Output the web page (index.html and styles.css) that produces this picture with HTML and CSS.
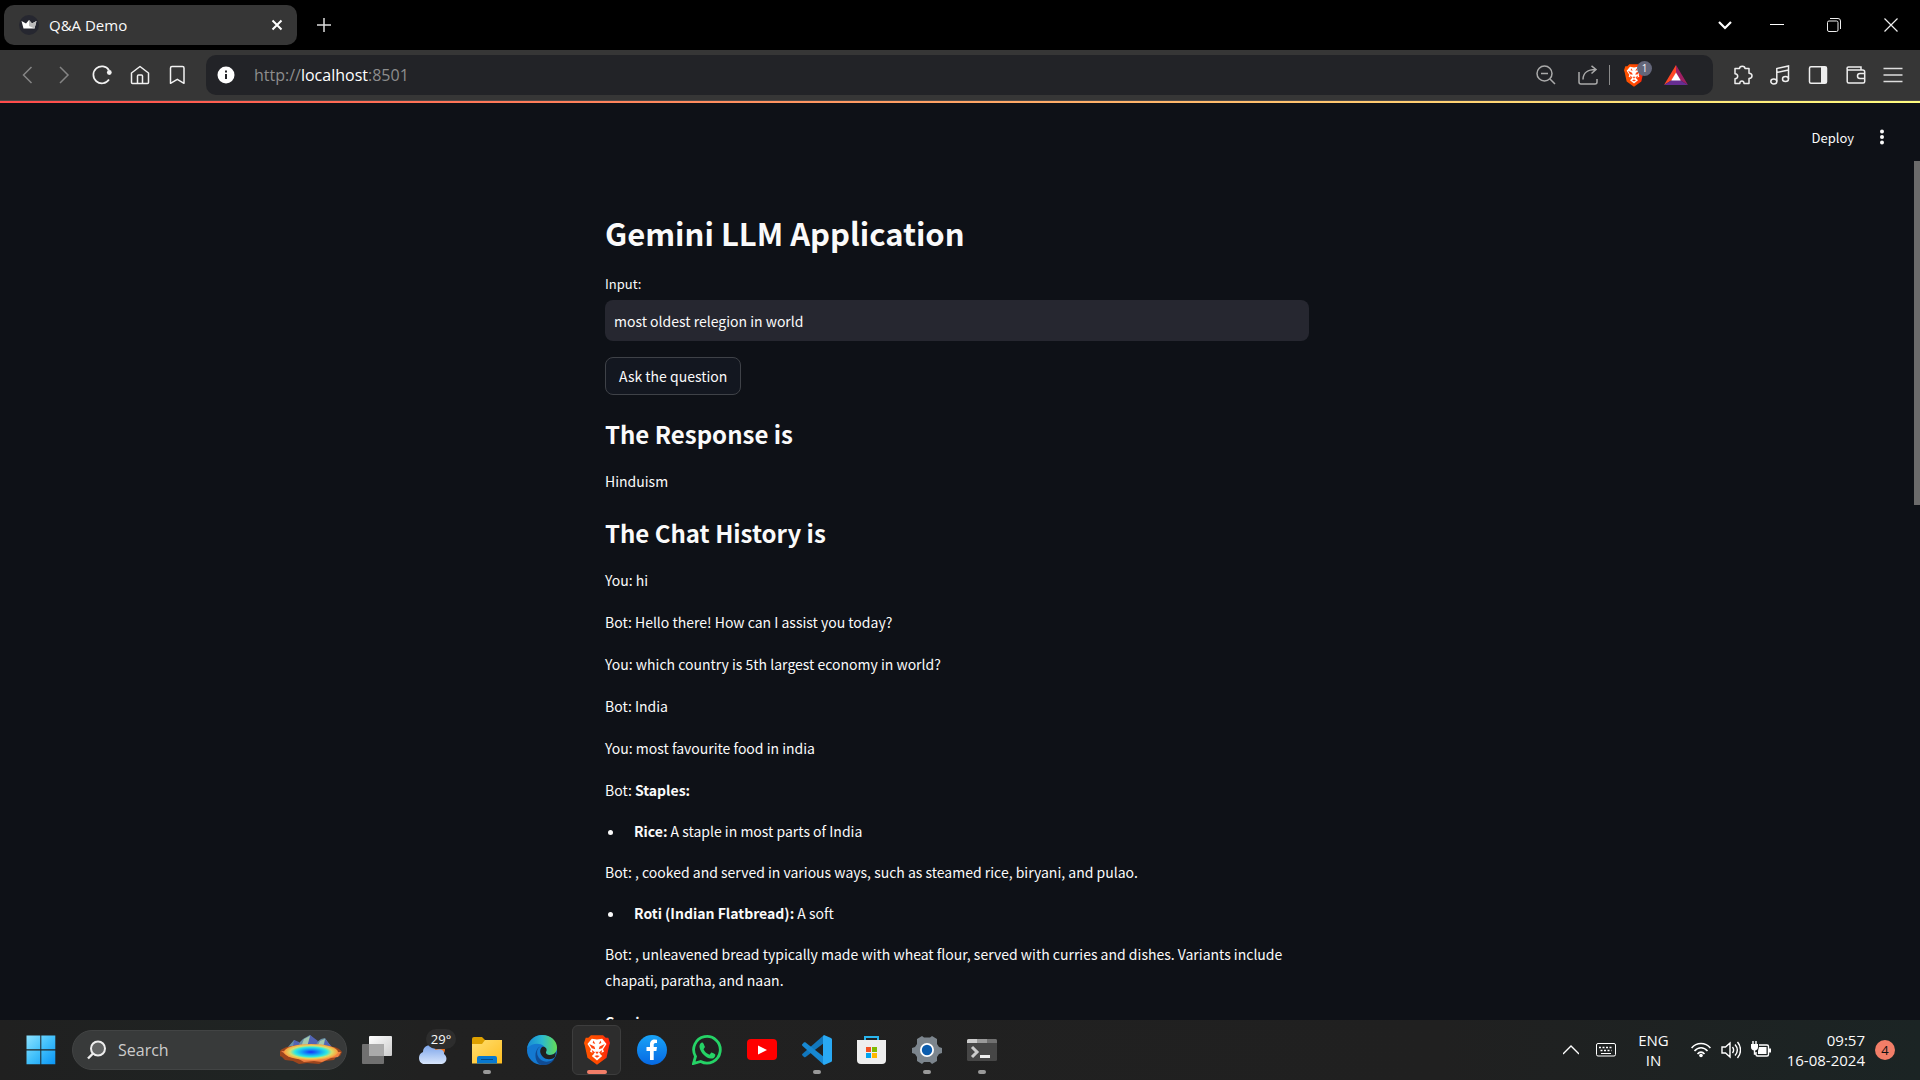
FILE: index.html
```html
<!DOCTYPE html>
<html lang="en">
<head>
<meta charset="utf-8">
<title>Q&amp;A Demo</title>
<link rel="stylesheet" href="styles.css">
</head>
<body>
<header class="tabstrip">
  <div class="tab">
    <svg class="favicon" width="20" height="20" viewBox="0 0 20 20"><circle cx="10" cy="10" r="10" fill="#262730"/><path d="M2.5 6 7 8.500 10 5l3 3.500L17.500 6 15.500 13.500h-11z" fill="#fff"/><path d="M10 5l3 3.500L17.500 6 15.500 13.500 10 11z" fill="#bbb"/></svg>
    <span class="tab-title">Q&amp;A Demo</span>
    <button class="icon-btn tab-close" aria-label="Close tab"><svg width="12" height="12" viewBox="0 0 12 12" stroke="#fff" stroke-width="2"><path d="M1.500 1.500l9 9M10.500 1.500l-9 9"/></svg></button>
  </div>
  <button class="icon-btn new-tab" aria-label="New tab"><svg width="14" height="14" viewBox="0 0 14 14" stroke="#ddd" stroke-width="1.500"><path d="M7 0v14M0 7h14"/></svg></button>
  <div class="window-controls">
    <button class="icon-btn chevron" aria-label="Search tabs"><svg width="14" height="10" viewBox="0 0 14 10" fill="none" stroke="#fff" stroke-width="2.200"><path d="M1 2l6 6 6-6"/></svg></button>
    <button class="icon-btn" aria-label="Minimize"><svg width="14" height="14" viewBox="0 0 14 14" stroke="#fff"><path d="M0 6.500h14"/></svg></button>
    <button class="icon-btn" aria-label="Restore"><svg width="14" height="14" viewBox="0 0 14 14" fill="none" stroke="#eee"><rect x=".5" y="3" width="10.500" height="10.500" rx="1.500"/><path d="M3 .5h8a2.500 2.500 0 0 1 2.500 2.500v8"/></svg></button>
    <button class="icon-btn" aria-label="Close"><svg width="14" height="14" viewBox="0 0 14 14" stroke="#eee" stroke-width="1.200"><path d="M.5.5l13 13M13.500.5l-13 13"/></svg></button>
  </div>
</header>

<nav class="toolbar">
  <div class="nav-buttons">
    <button class="icon-btn" aria-label="Back"><svg width="20" height="20" viewBox="0 0 20 20" fill="none" stroke="#858585" stroke-width="1.500"><path d="M14.500 2l-8 8 8 8"/></svg></button>
    <button class="icon-btn" aria-label="Forward"><svg width="20" height="20" viewBox="0 0 20 20" fill="none" stroke="#858585" stroke-width="1.500"><path d="M6 2l8 8-8 8"/></svg></button>
    <button class="icon-btn" aria-label="Reload"><svg width="20" height="20" viewBox="0 0 20 20" fill="none" stroke="#f2f2f2" stroke-width="1.700"><path d="M17 14.500A8.500 8.500 0 1 1 17 5.200"/><circle cx="17.300" cy="7.500" r="2.400" fill="#f2f2f2" stroke="none"/></svg></button>
    <button class="icon-btn" aria-label="Home"><svg width="20" height="20" viewBox="0 0 20 20" fill="none" stroke="#f2f2f2" stroke-width="1.500" stroke-linejoin="round"><path d="M1.500 8 10 1.500 18.500 8v9.500a1 1 0 0 1-1 1h-15a1 1 0 0 1-1-1zM7.500 18.500V11a1 1 0 0 1 1-1h3a1 1 0 0 1 1 1v7.500"/></svg></button>
    <button class="icon-btn" aria-label="Bookmark"><svg width="20" height="20" viewBox="0 0 20 20" fill="none" stroke="#f2f2f2" stroke-width="1.500" stroke-linejoin="round"><path d="M3.500 18.300V3a1.500 1.500 0 0 1 1.500-1.500h10.500A1.500 1.500 0 0 1 17 3v15.300l-6.700-4z"/></svg></button>
  </div>
  <div class="address">
    <button class="icon-btn" aria-label="Site information"><svg width="18" height="18" viewBox="0 0 18 18"><circle cx="9" cy="9" r="8.500" fill="#fff"/><path d="M9 8v5M9 4.500v2" stroke="#222327" stroke-width="2"/></svg></button>
    <div class="url" role="textbox" aria-label="Address">http://<span class="host">localhost</span>:8501</div>
    <button class="icon-btn zoom-btn" aria-label="Zoom"><svg width="20" height="20" viewBox="0 0 20 20" fill="none" stroke="#aaa" stroke-width="1.500"><circle cx="8.500" cy="8.500" r="7.500"/><path d="M14 14l5 5M5 8.500h7"/></svg></button>
    <button class="icon-btn share-btn" aria-label="Share"><svg width="20" height="20" viewBox="0 0 20 20" fill="none" stroke="#aaa" stroke-width="1.500"><path d="M1 7v10a2 2 0 0 0 2 2h14a2 2 0 0 0 2-2v-3M5 14.500C5 8 10 4.500 17.500 4.500M13.500.8l4.500 3.700-4.500 4"/></svg></button>
    <span class="divider"></span>
    <button class="icon-btn shield" aria-label="Shields"><svg width="20" height="23" viewBox="0 0 30 34"><use href="#lion"/></svg><span class="shield-count">1</span></button>
    <button class="icon-btn" aria-label="Rewards"><svg width="24" height="20" viewBox="0 0 24 20"><path d="M12 0 0 20l8-5 4-7z" fill="#ff4724"/><path d="M12 0v8l4 7 8 5z" fill="#9e1f63"/><path d="M0 20h24l-8-5H8z" fill="#662d91"/><path d="M12 7.500l4.800 8H7.200z" fill="#fff"/></svg></button>
  </div>
  <div class="nav-buttons">
    <button class="icon-btn" aria-label="Extensions"><svg width="20" height="20" viewBox="0 0 20 20" fill="none" stroke="#eee" stroke-width="1.500" stroke-linejoin="round"><path d="M2 3.500h4.500c0-3 5.500-3 5.500 0h4v4.700c4 .1 4 5 0 5.300v5h-5c.2-3.300-4.400-3.300-4.200 0H2v-4.700c3.600-.2 3.600-4.800 0-5z"/></svg></button>
    <button class="icon-btn" aria-label="Media"><svg width="20" height="20" viewBox="0 0 20 20" fill="none" stroke="#eee" stroke-width="1.500"><ellipse cx="3.800" cy="16.500" rx="3" ry="2.500"/><ellipse cx="15.500" cy="14" rx="3" ry="2.500"/><path d="M6.800 16.500V3.500l11.700-2.500v13M6.800 7.500l11.700-2.500"/></svg></button>
    <button class="icon-btn" aria-label="Side panel"><svg width="20" height="20" viewBox="0 0 20 20"><rect x="1.500" y="1.700" width="17" height="16.500" rx="1.500" fill="none" stroke="#eee" stroke-width="1.500"/><path d="M13 2h6v16h-6z" fill="#eee"/></svg></button>
    <button class="icon-btn" aria-label="Wallet"><svg width="20" height="20" viewBox="0 0 20 20" fill="none" stroke="#eee" stroke-width="1.500"><path d="M1.200 4v12.500a1.500 1.500 0 0 0 1.500 1.500h14.500a1.500 1.500 0 0 0 1.500-1.500V7a2 2 0 0 0-2-2H2.500A1.500 1.500 0 0 1 2.500 2h12.500v2.500"/><path d="M18.700 8.500H14a2.500 2.500 0 0 0 0 5h4.700"/></svg></button>
    <button class="icon-btn" aria-label="Menu"><svg width="20" height="20" viewBox="0 0 20 20" stroke="#ddd" stroke-width="1.600"><path d="M.5 3.500h19M.5 10h19M.5 16.500h19"/></svg></button>
  </div>
</nav>

<main class="page">
  <div class="app-header">
    <button class="deploy">Deploy</button>
    <button class="icon-btn" aria-label="App menu"><svg width="20" height="20" viewBox="0 0 20 20" fill="#fafafa"><circle cx="10" cy="4.500" r="2"/><circle cx="10" cy="10" r="2"/><circle cx="10" cy="15.500" r="2"/></svg></button>
  </div>
  <div class="scroll-area">
    <article class="content">
      <h1>Gemini LLM Application</h1>
      <label for="question">Input:</label>
      <input class="question" id="question" type="text" value="most oldest relegion in world" spellcheck="false">
      <button class="ask">Ask the question</button>
      <h2>The Response is</h2>
      <p>Hinduism</p>
      <h2>The Chat History is</h2>
      <p>You: hi</p>
      <p>Bot: Hello there! How can I assist you today?</p>
      <p>You: which country is 5th largest economy in world?</p>
      <p>Bot: India</p>
      <p>You: most favourite food in india</p>
      <p>Bot: <strong>Staples:</strong></p>
      <ul><li><strong>Rice:</strong> A staple in most parts of India</li></ul>
      <p>Bot: , cooked and served in various ways, such as steamed rice, biryani, and pulao.</p>
      <ul><li><strong>Roti (Indian Flatbread):</strong> A soft</li></ul>
      <p>Bot: , unleavened bread typically made with wheat flour, served with curries and dishes. Variants include chapati, paratha, and naan.</p>
      <p><strong>Curries:</strong></p>
    </article>
    <div class="scrollbar"><div class="thumb"></div></div>
  </div>
</main>

<footer class="taskbar">
  <button class="icon-btn start" aria-label="Start"><svg width="30" height="30" viewBox="0 0 30 30"><defs><linearGradient id="win" x1="0" y1="0" x2="1" y2="1"><stop stop-color="#8de2ff"/><stop offset=".5" stop-color="#41c0fb"/><stop offset="1" stop-color="#0a95f5"/></linearGradient></defs><path d="M.5.5h13.800v13.800H.5zM15.300.5h14v13.800h-14zM.5 15.500h13.800v13.800H.5zM15.300 15.500h14v13.800h-14z" fill="url(#win)"/></svg></button>
  <div class="search">
    <svg width="20" height="20" viewBox="0 0 20 20" fill="#626464" stroke="#eee" stroke-width="2"><circle cx="11" cy="8.500" r="7"/><path d="M6 13.500 1 18.500" stroke-width="2.400"/></svg>
    <input class="search-field" type="text" placeholder="Search" aria-label="Search">
    <svg class="spring" width="62" height="32" viewBox="0 0 62 32"><defs><radialGradient id="pool"><stop stop-color="#1730f5"/><stop offset=".35" stop-color="#15a5f5"/><stop offset=".6" stop-color="#2ee8e0"/><stop offset=".78" stop-color="#d8dd6a"/><stop offset="1" stop-color="#ff9c3a"/></radialGradient></defs><path d="M8 13l6-7 5 3 4-4 7-4 7 7 4-3 4-1 7 10z" fill="#6a91a8"/><path d="M30 1l-3 11 8 1 3-6zM14 6l-1 7h7l-1-5zM45 5l-1 8h8z" fill="#5264b5"/><path d="M24 5l-3 8h6l3-11zM40 7l-3 6h6l2-8z" fill="#a4c9af"/><path d="M0 17c3-4 12-6 31-6s28 2 31 7l-2 4-4 1-2 3-9 1-6 3-12-1-8 1-6-3-8-1-3-3-4-2z" fill="#9c451d"/><path d="M1 17l8 6 8 1 7 4 10-1 8 1 9-4 7-1 3-5z" fill="#ee8144"/><ellipse cx="31" cy="18" rx="27" ry="8" fill="url(#pool)"/></svg>
  </div>
  <div class="apps">
    <button class="app" aria-label="Task view"><svg width="30" height="30" viewBox="0 0 30 30"><defs><linearGradient id="pane" x2="1" y2="1"><stop stop-color="#fff"/><stop offset="1" stop-color="#ccc"/></linearGradient></defs><rect x="7" y="1" width="23" height="20" rx="1" fill="url(#pane)"/><rect y="9" width="22" height="20" rx="1" fill="#707070"/><path d="M7 9h15v12H7z" fill="#aaa"/></svg></button>
    <button class="app weather" aria-label="Weather"><svg width="30" height="30" viewBox="0 0 30 30"><defs><linearGradient id="cloud" x2="0" y2="1"><stop stop-color="#7da5ea"/><stop offset="1" stop-color="#d8e6fc"/></linearGradient></defs><circle cx="22" cy="15" r="6" fill="#e9711c"/><path d="M6 29a6.500 6.500 0 0 1 0-12C6 9 17 8 18.500 15c6-2 9 1 8.500 4 4 3 3 9-2 10z" fill="url(#cloud)"/></svg><span class="temp">29°</span></button>
    <button class="app running" aria-label="File Explorer"><svg width="30" height="30" viewBox="0 0 30 30"><path d="M0 4a2 2 0 0 1 2-2h8l3 3v8H0z" fill="#dda000"/><defs><linearGradient id="folder" x2="1" y2="1"><stop stop-color="#ffdf70"/><stop offset="1" stop-color="#ffbd20"/></linearGradient></defs><path d="M0 9h10l3-4h17v23.500H0z" fill="url(#folder)"/><path d="M5 28.500V23a2 2 0 0 1 2-2h16a2 2 0 0 1 2 2v5.500z" fill="#0878cf"/><path d="M9 24.500h12" stroke="#064b86"/></svg></button>
    <button class="app" aria-label="Edge"><svg width="30" height="30" viewBox="0 0 30 30"><defs><linearGradient id="edgeTop" x2="1"><stop stop-color="#1689d6"/><stop offset=".5" stop-color="#2bb9cf"/><stop offset="1" stop-color="#65dd54"/></linearGradient></defs><circle cx="15" cy="15" r="15" fill="#1479d1"/><path d="M0 13C2 5 8 0 15 0c9 0 15 6 15 12.500 0 5-3.500 7.500-7 7.500-3 0-4.500-1.200-4-3C20 9 8 5 0 13z" fill="url(#edgeTop)"/><path d="M15 11c-5 1-7 8-2 13s13 2 15-1c-3 6-9 8-14 7C6 27 7 12 15 11z" fill="#104b93"/><path d="M15 12c3-1 6 2 4 5-.5 1.500 1 3 3.500 3 3 0 5-1 6.500-3l-1 5c-3 3-9 3-12 0s-4-7-1-10z" fill="#202020"/></svg></button>
    <button class="app active" aria-label="Brave"><svg width="26" height="30" viewBox="0 0 30 34"><defs><linearGradient id="brave"><stop stop-color="#ff5500"/><stop offset=".6" stop-color="#ff4700"/><stop offset="1" stop-color="#ff1d10"/></linearGradient>
      <g id="lion"><path d="M8 0h14l3 3h3l2 6-1 3-3 14-11 8L4 26 1 12 0 9l2-6h3z" fill="url(#brave)"/><path d="M9 4l6 1 6-1 5 6-4 6 1 3-5 2 3 3-6 5-6-5 3-3-5-2 1-3-4-6z" fill="#fff"/><path d="M6 10l6 3 1 3-4-1zM24 10l-6 3-1 3 4-1zM11 6l2 4-3-1zM19 6l-2 4 3-1zM13 19h4l-2 3zM9 17l4 3-3 1zM21 17l-4 3 3 1zM12 24l3-1 3 1-3 2z" fill="#ff4310"/></g></defs><use href="#lion"/></svg></button>
    <button class="app" aria-label="Facebook"><svg width="30" height="30" viewBox="0 0 30 30"><defs><linearGradient id="face" x2="0" y2="1"><stop stop-color="#18a3f7"/><stop offset="1" stop-color="#0668e3"/></linearGradient></defs><circle cx="15" cy="15" r="15" fill="url(#face)"/><path d="M13 25v-9H9.500v-4H13V9.500C13 6 15 4.500 17.500 4.500l2.500.2V8h-1.500C17 8 16.700 9 16.700 10v2H20l-.6 4h-2.700v9z" fill="#fff"/></svg></button>
    <button class="app" aria-label="WhatsApp"><svg width="30" height="30" viewBox="0 0 30 30"><path d="M1.500 28.500l2-7A13.300 13.300 0 1 1 8.700 26.500z" fill="none" stroke="#25d366" stroke-width="2.800"/><path d="M10 7.500c1 0 1.300.4 3 4.500l-1.500 2.200c1.500 3 3.300 4.300 6 5.500l1.800-2.200c.8.100 3.700 1.500 4 1.900.2 3-2.300 4.300-4.500 4.200C14 23 8.500 18 7.500 12c-.2-2 1-4.300 2.500-4.500z" fill="#25d366"/></svg></button>
    <button class="app" aria-label="YouTube"><svg width="30" height="30" viewBox="0 0 30 30"><rect y="4" width="30" height="21" rx="4" fill="#f00"/><path d="M11 10.500l9 4.500-9 4.500z" fill="#fff"/></svg></button>
    <button class="app running" aria-label="Visual Studio Code"><svg width="30" height="30" viewBox="0 0 30 30"><path d="M0 20l2 2c.5.400 1 .4 1.600 0L22 8V0L.300 19z" fill="#1177bd"/><path d="M0 9.500 2 7.500c.5-.4 1-.4 1.600 0L22 22v8L.3 10.800z" fill="#1788d2"/><path d="M22 0l7 3c.7.400 1 .8 1 1.500v21c0 .7-.3 1.200-1 1.500l-7 3-1-1.500V1.500z" fill="#29a9f4"/></svg></button>
    <button class="app" aria-label="Microsoft Store"><svg width="30" height="30" viewBox="0 0 30 30"><path d="M8 7V2h13v5" fill="none" stroke="#29b5ed" stroke-width="2"/><path d="M0 5h29v20a4 4 0 0 1-4 4H4a4 4 0 0 1-4-4z" fill="#eee"/><path d="M9 12h5v5H9z" fill="#f25022"/><path d="M15 12h5v5h-5z" fill="#7fba00"/><path d="M9 18h5v5H9z" fill="#00a4ef"/><path d="M15 18h5v5h-5z" fill="#ffb900"/></svg></button>
    <button class="app running" aria-label="Settings"><svg width="30" height="30" viewBox="0 0 30 30"><path d="M10 1l2 1.500h6L20 1l5 3v5l2 3 3 1v5l-3 1-2 3 0 4-5 3-2-2h-6l-2 2-5-3 0-4-2-3-3-1v-5l3-1 2-3V4z" fill="#7c858d"/><circle cx="15" cy="15" r="7" fill="#fff"/><circle cx="15" cy="15" r="5.200" fill="#0b5cad"/></svg></button>
    <button class="app running" aria-label="Terminal"><svg width="30" height="30" viewBox="0 0 30 30"><rect y="4" width="30" height="22" rx="1.500" fill="#464646"/><path d="M0 8V5.500A1.500 1.500 0 0 1 1.500 4H10v4z" fill="#ccc"/><path d="M10 4h10v4H10z" fill="#999"/><path d="M20 4h8.500A1.500 1.500 0 0 1 30 5.500V8H20z" fill="#707070"/><path d="M5 12l5 5-5 5" fill="none" stroke="#ccc" stroke-width="3"/><path d="M13 20h10v3H13z" fill="#eee"/></svg></button>
  </div>
  <div class="tray">
    <button class="icon-btn" aria-label="Hidden icons"><svg width="16" height="16" viewBox="0 0 16 16" fill="none" stroke="#fff" stroke-width="1.300"><path d="M0 12l8-8 8 8"/></svg></button>
    <button class="icon-btn" aria-label="Touch keyboard"><svg width="20" height="14" viewBox="0 0 20 14" fill="none" stroke="#fff"><rect x=".5" y=".5" width="19" height="12.500" rx="1.500"/><path d="M3 4.500h14M4.500 7.500h11" stroke-dasharray="2 1.500" stroke-width="1.600"/><path d="M5 10.500h10"/></svg></button>
    <button class="text-btn language">ENG<br>IN</button>
    <button class="icon-btn status" aria-label="Network, sound and battery">
      <svg width="20" height="16" viewBox="0 0 20 16" fill="none" stroke="#fff" stroke-width="1.600"><path d="M.6 6c5-6 13.800-6 18.800 0M3.500 9c3.700-4.400 9.300-4.400 13 0M6.500 12c2-2.500 5-2.500 7 0"/><circle cx="10" cy="13.500" r="1.800" fill="#fff" stroke="none"/></svg>
      <svg width="20" height="18" viewBox="0 0 20 18" fill="none" stroke="#fff" stroke-width="1.400"><path d="M1 6h3.500L9 2v14l-4.500-4H1zM11.500 6c1.500 2 1.500 4 0 6M14 3.500c3 3.500 3 7.500 0 11M16.500 1c4 4.500 4 11.500 0 16"/></svg>
      <svg width="20" height="18" viewBox="0 0 20 18" fill="none" stroke="#fff" stroke-width="1.400"><path d="M8 4h8a1.500 1.500 0 0 1 1.500 1.500v8A1.500 1.500 0 0 1 16 15H6.500A1.500 1.500 0 0 1 5 13.500V11"/><path d="M8 6h7.500v7H7v-3zM18 7.500h2v4h-2z" fill="#fff" stroke="none"/><path d="M0 3h7v3a3 3 0 0 1-7 0z" fill="#fff" stroke="none"/><path d="M2 0v4M5 0v4M3.500 8v5H5"/></svg>
    </button>
    <button class="text-btn clock">09:57<br>16-08-2024</button>
    <span class="notice">4</span>
  </div>
</footer>
</body>
</html>
```
FILE: styles.css
```css
* { box-sizing: border-box; }

body {
  margin: 0;
  height: 100vh;
  display: flex;
  flex-direction: column;
  overflow: hidden;
  background: #0e1117;
  color: #fafafa;
  font-family: "Open Sans", "Noto Sans", sans-serif;
  font-size: 14px;
}

button, input { font: inherit; color: inherit; }
svg { display: block; flex: none; }

.icon-btn, .app, .text-btn, .deploy {
  border: 0;
  padding: 0;
  background: none;
  display: flex;
  align-items: center;
  justify-content: center;
}

/* Window frame */
.tabstrip {
  flex: none;
  height: 50px;
  display: flex;
  align-items: center;
  padding: 0 1px 0 4px;
  background: #000;
}
.tab {
  width: 293px;
  height: 40px;
  display: flex;
  align-items: center;
  gap: 10px;
  padding: 0 14px 0 15px;
  border-radius: 10px;
  background: #363636;
}
.tab-title { flex: 1; font-size: 15px; }
.new-tab { margin-left: 20px; }
.window-controls { display: flex; margin-left: auto; }
.window-controls .icon-btn { width: 57px; height: 50px; }
.window-controls .chevron { width: 46px; }

.toolbar {
  flex: none;
  height: 51px;
  display: flex;
  align-items: center;
  padding: 0 8px;
  background: #363636;
  border-bottom: 1px solid #4c4848;
}
.nav-buttons { display: flex; flex: none; width: 188px; }
.nav-buttons .icon-btn { flex: 1; height: 40px; }
.address {
  flex: 1;
  height: 40px;
  display: flex;
  align-items: center;
  margin: 0 11px 0 10px;
  padding: 0 25px 0 11px;
  border-radius: 10px;
  background: #222327;
}
.url { flex: 1; margin-left: 19px; font-size: 16px; color: #8d8d8d; }
.host { color: #fff; }
.zoom-btn { margin-right: 22px; }
.share-btn { margin-right: 11px; }
.divider { width: 1px; height: 20px; margin-right: 14px; background: #8a8a8a; }
.shield { position: relative; margin-right: 20px; }
.shield-count {
  position: absolute;
  left: 13px;
  top: -3px;
  width: 15px;
  height: 15px;
  border-radius: 8px;
  background: #63667a;
  font-size: 10px;
  line-height: 15px;
}

/* Streamlit page */
.page {
  flex: 1;
  min-height: 0;
  display: flex;
  flex-direction: column;
  font-family: "Noto Sans CJK JP", "Noto Sans", sans-serif;
}
.app-header {
  flex: none;
  height: 60px;
  display: flex;
  align-items: center;
  justify-content: flex-end;
  gap: 18px;
  padding: 10px 28px 0 0;
  border-top: 2px solid;
  border-image: linear-gradient(90deg, #ff4b4b, #fffd80) 1;
}
.deploy { font-size: 13px; }
.scroll-area {
  flex: 1;
  min-height: 0;
  display: flex;
  overflow: hidden;
}
.content {
  flex: 1;
  max-width: 704px;
  margin: 0 auto;
  padding-top: 46px;
  line-height: 26px;
}
.scrollbar { width: 6px; }
.thumb { height: 40%; background: #6b6b6b; }

h1 { margin: 0 0 15px; font-size: 31px; line-height: 52px; }
label { display: block; margin-bottom: 6px; font-size: 13px; line-height: 20px; }
.question {
  display: block;
  width: 100%;
  height: 41px;
  padding: 0 9px;
  border: 0;
  border-radius: 8px;
  background: #262730;
}
.ask {
  display: block;
  height: 38px;
  margin: 16px 0 22px;
  padding: 0 13px;
  border: 1px solid #3f4248;
  border-radius: 8px;
  background: #131720;
}
h2 { margin: 0 0 17px; font-size: 24px; line-height: 34px; }
p { margin: 0 0 16px; }
p + h2 { margin-top: 22px; }
ul { margin: 0 0 16px; padding-left: 20px; line-height: 24px; }
li { padding-left: 9px; }

/* Taskbar */
.taskbar {
  flex: none;
  height: 60px;
  display: flex;
  align-items: center;
  background: linear-gradient(90deg, #202020, #1f2423 15%, #212121 22%, #202020 75%, #1b2424);
}
.start { margin: 0 16px 0 26px; }
.search {
  width: 275px;
  height: 40px;
  display: flex;
  align-items: center;
  padding: 0 4px 0 14px;
  border: 1px solid #424444;
  border-radius: 20px;
  background: #383a3a;
}
.search-field {
  flex: 1;
  min-width: 0;
  padding: 0;
  margin-left: 11px;
  border: 0;
  background: none;
  font-size: 16px;
}
.search-field::placeholder { color: #ccc; opacity: 1; }
.apps { display: flex; margin-left: 2px; }
.app {
  position: relative;
  width: 55px;
  height: 60px;
}
.active::before {
  content: "";
  position: absolute;
  inset: 5px 3px;
  border: 1px solid #3d3d3d;
  border-radius: 6px;
  background: #2d2d2d;
}
.active svg { position: relative; }
.running::after, .active::after {
  content: "";
  position: absolute;
  bottom: 6px;
  width: 8px;
  height: 4px;
  border-radius: 2px;
  background: #999;
}
.active::after { width: 20px; background: #f27e68; }
.temp {
  position: absolute;
  top: 9px;
  right: 3px;
  width: 30px;
  border-radius: 10px;
  background: #2d2d2d;
  font-size: 13px;
  line-height: 20px;
}
.tray { display: flex; align-items: center; margin-left: auto; padding-right: 25px; }
.tray .icon-btn { margin-right: 17px; }
.tray .text-btn { line-height: 20px; font-size: 15px; }
.tray .language { margin: 0 22px 0 5px; }
.tray .status { gap: 10px; margin-right: 16px; }
.tray .clock { text-align: right; }
.notice {
  width: 20px;
  height: 20px;
  margin-left: 10px;
  border-radius: 10px;
  background: #f27e68;
  color: #111;
  font-size: 13px;
  line-height: 20px;
  text-align: center;
}
```
